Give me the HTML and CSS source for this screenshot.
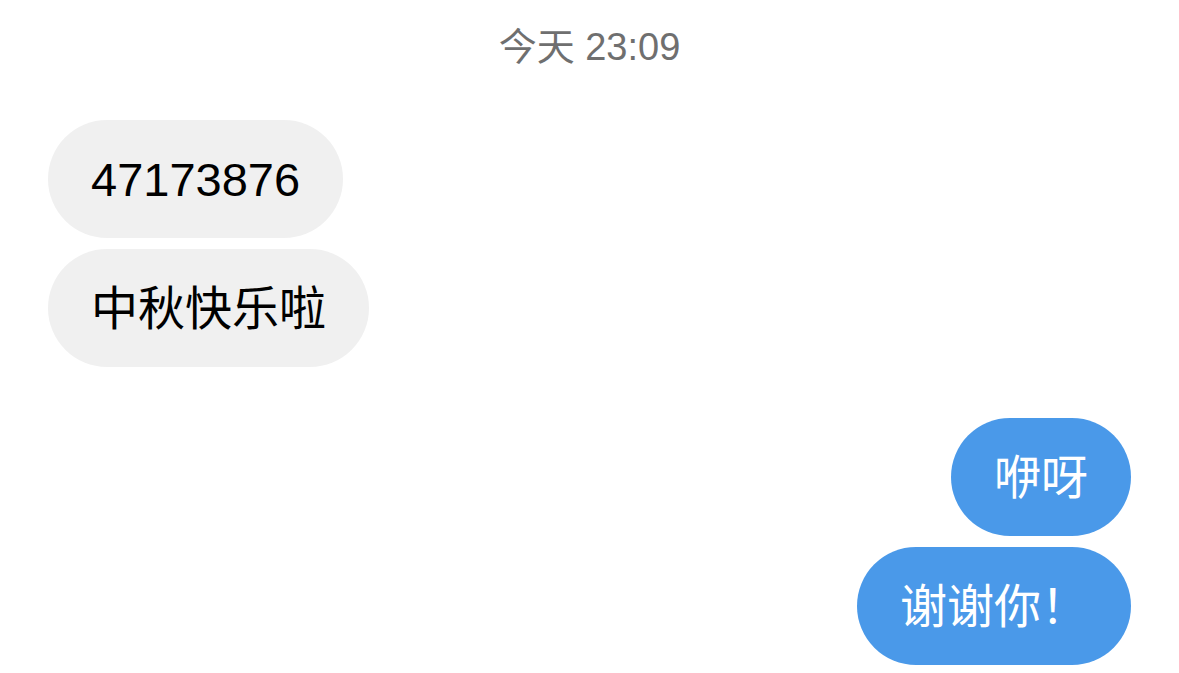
FILE: index.html
```html
<!DOCTYPE html>
<html lang="zh-CN">
<head>
    <meta charset="UTF-8">
    <meta name="viewport" content="width=device-width, initial-scale=1.0">
    <title>聊天</title>
    <link rel="stylesheet" href="styles.css">
</head>
<body>

    <div class="chat">
        <!-- time divider -->
        <div class="time">今天 23:09</div>

        <div class="group">
            <div class="bubble in">47173876</div>
            <div class="bubble in">中秋快乐啦</div>
        </div>

        <div class="group out-group">
            <div class="bubble out">咿呀</div>
            <div class="bubble out">谢谢你！</div>
        </div>
    </div>

</body>
</html>
```

FILE: styles.css
```css
body {
    margin: 0;
    background-color: #ffffff;
    font-family: "Liberation Sans", "Noto Sans CJK SC", sans-serif;
}

.chat {
    padding: 22px 48px 0 48px;
    display: flex;
    flex-direction: column;
}

.time {
    text-align: center;
    font-size: 38px;
    line-height: 50px;
    color: #6f6f6f;
    margin-bottom: 48px;
}

/* a run of bubbles from one side */
.group {
    display: flex;
    flex-direction: column;
    align-items: flex-start;
    gap: 11px;
}

.out-group {
    align-items: flex-end;
    margin-top: 51px;
}

.bubble {
    font-size: 47px;
    line-height: 60px;
    padding: 30px 43px 28px 43px;
    border-radius: 60px;
}

.in {
    background-color: #f0f0f0;
    color: #000000;
}

.out {
    background-color: #4a99e9;
    color: #ffffff;
}
```
